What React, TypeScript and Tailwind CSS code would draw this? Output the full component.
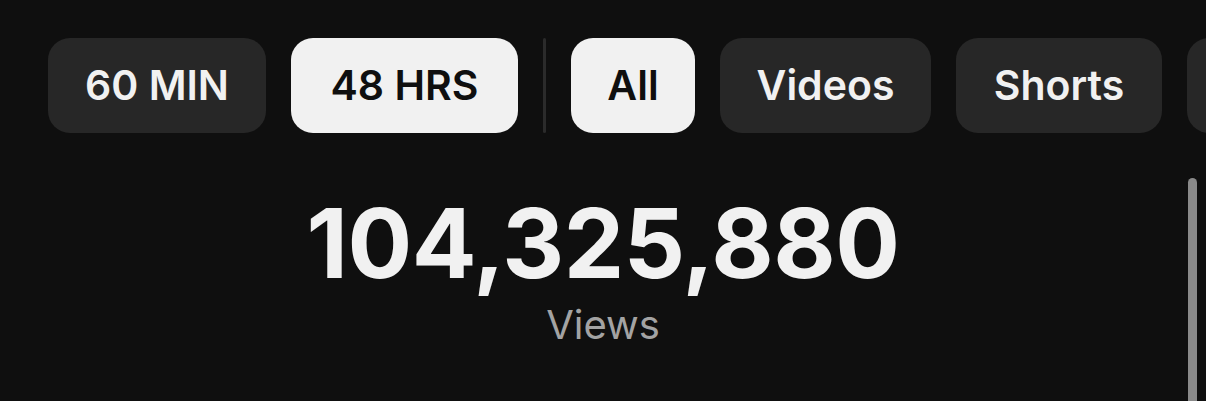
import React from "react"

type ChipItem = { label: string; width: string; active?: boolean; offscreen?: boolean }

const timeRanges: ChipItem[] = [
    { label: "60 MIN", width: "w-[218px]" },
    { label: "48 HRS", width: "w-[227px]", active: true },
]

const contentTypes: ChipItem[] = [
    { label: "All", width: "w-[124px]", active: true },
    { label: "Videos", width: "w-[211px]" },
    { label: "Shorts", width: "w-[206px]" },
    // scrolled past the right edge, only its left side peeks in
    { label: "Live", width: "w-[150px]", offscreen: true },
]

function Chip({ item }: { item: ChipItem }) {
    return (
        <button
            aria-label={item.label}
            className={`shrink-0 ${item.width} h-[95px] rounded-[22px] text-[41px] font-semibold leading-none ${
                item.active ? "bg-[#f1f1f1] text-[#0f0f0f]" : "bg-[#272727] text-[#f1f1f1]"
            }`}
        >
            {item.offscreen ? null : item.label}
        </button>
    )
}

export default function App() {
    return (
        <div className="relative w-[1206px] h-[401px] overflow-hidden bg-[#0f0f0f] font-['Inter','Liberation_Sans',sans-serif]">
            {/* Filter chips */}
            <div className="flex items-center gap-[25px] pl-[48px] pt-[38px]">
                {timeRanges.map((t) => (
                    <Chip key={t.label} item={t} />
                ))}
                <div className="shrink-0 w-[3px] h-[95px] bg-[#2b2b2b] rounded-full" />
                {contentTypes.map((t) => (
                    <Chip key={t.label} item={t} />
                ))}
            </div>

            {/* Stat */}
            <div className="flex flex-col items-center mt-[62px]">
                <div className="text-[96px] font-bold leading-none text-[#f1f1f1] tracking-[-0.5px]">
                    104,325,880
                </div>
                <div className="mt-[14px] text-[40px] font-normal leading-none text-[#a3a3a3]">
                    Views
                </div>
            </div>

            {/* Scrollbar */}
            <div className="absolute left-[1188px] top-[178px] w-[9px] h-[240px] rounded-full bg-[#8a8a8a]" />
        </div>
    )
}
